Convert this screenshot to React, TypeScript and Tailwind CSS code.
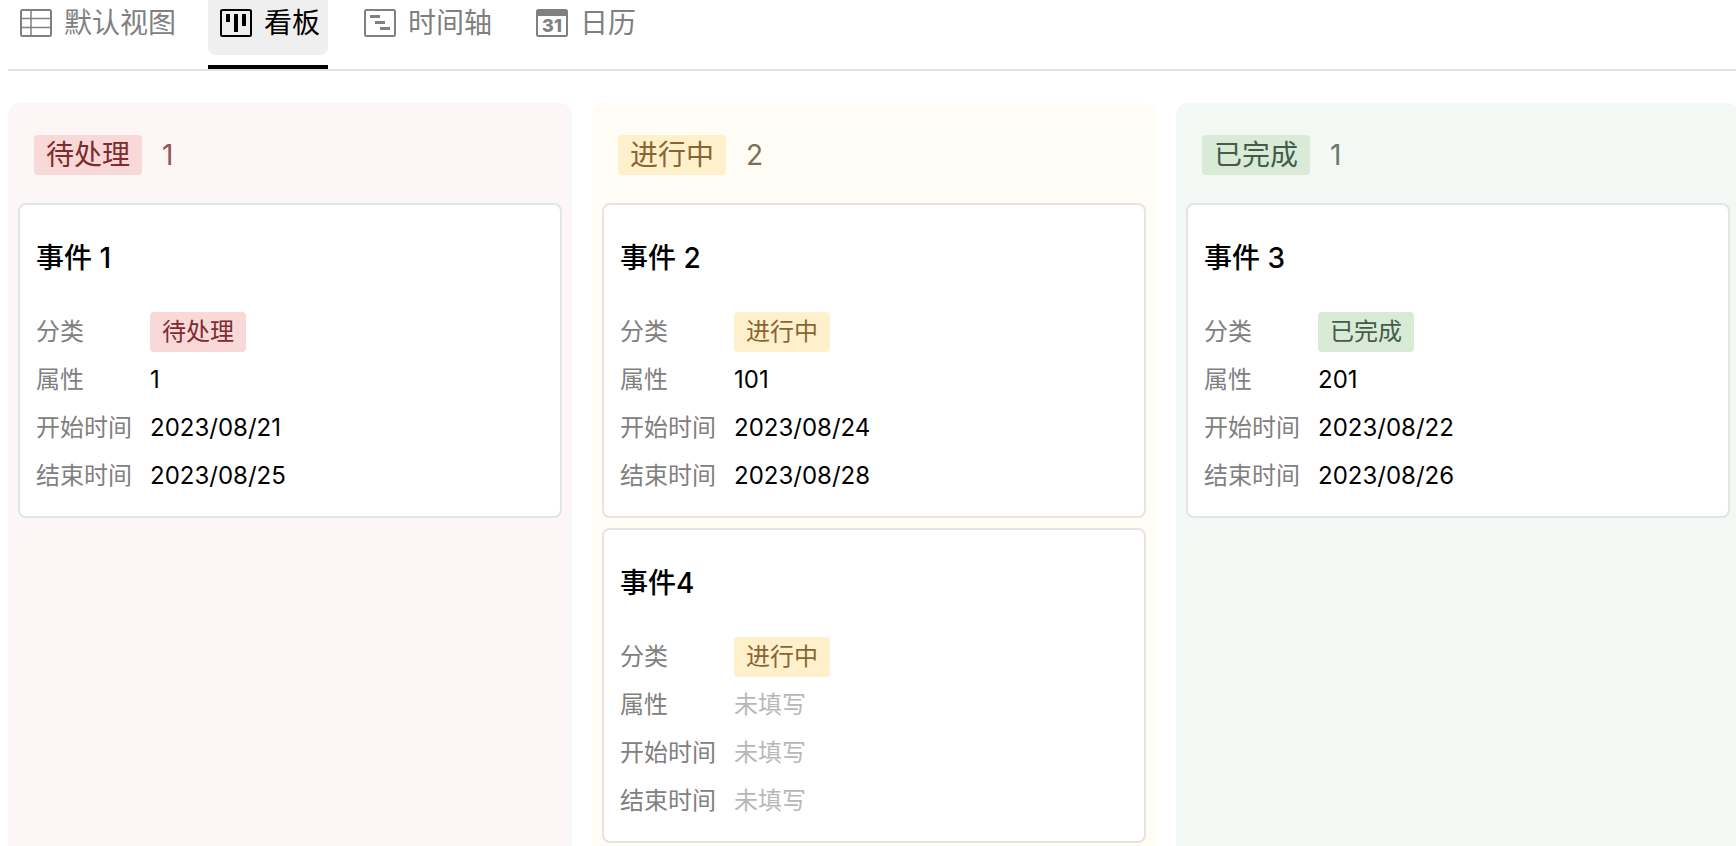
import { useState } from "react";
import type { ReactNode } from "react";
import clsx from "clsx";

type Status = "todo" | "doing" | "done";

type EventItem = {
  title: string;
  status: Status;
  value?: string;
  start?: string;
  end?: string;
};

const statusMap = {
  todo: {
    label: "待处理",
    column: "bg-[#fcf6f6]",
    tag: "bg-[#f9d8d8] text-[#7d2b2f]",
    count: "text-[#8f5558]",
  },
  doing: {
    label: "进行中",
    column: "bg-[#fffcf5]",
    tag: "bg-[#fef0cb] text-[#8a6433]",
    count: "text-[#816b52]",
  },
  done: {
    label: "已完成",
    column: "bg-[#f3f8f5]",
    tag: "bg-[#d9ebd7] text-[#435b4a]",
    count: "text-[#66796b]",
  },
};

const statusOrder: Status[] = ["todo", "doing", "done"];

const events: EventItem[] = [
  { title: "事件 1", status: "todo", value: "1", start: "2023/08/21", end: "2023/08/25" },
  { title: "事件 2", status: "doing", value: "101", start: "2023/08/24", end: "2023/08/28" },
  { title: "事件4", status: "doing" },
  { title: "事件 3", status: "done", value: "201", start: "2023/08/22", end: "2023/08/26" },
];

const TableIcon = () => (
  <svg width="32" height="28" viewBox="0 0 32 28" fill="none" stroke="currentColor">
    <rect x="1" y="1" width="30" height="26" rx="1.5" strokeWidth="2" />
    <path d="M11 1v26M1 9.5h30M1 18.5h30" strokeWidth="1.5" />
  </svg>
);

const BoardIcon = () => (
  <svg width="32" height="28" viewBox="0 0 32 28" fill="none" stroke="currentColor">
    <rect x="1" y="1" width="30" height="26" rx="1.5" strokeWidth="2" />
    <path d="M8 5v8M16 5v18M24 5v12" strokeWidth="4" />
  </svg>
);

const TimelineIcon = () => (
  <svg width="32" height="28" viewBox="0 0 32 28" fill="none" stroke="currentColor">
    <rect x="1" y="1" width="30" height="26" rx="1.5" strokeWidth="2" />
    <path d="M6 7.5h10M11 13.5h10M16 19.5h10" strokeWidth="3" />
  </svg>
);

const CalendarIcon = () => (
  <svg width="32" height="28" viewBox="0 0 32 28" fill="none">
    <rect x="1" y="1" width="30" height="26" rx="1.5" stroke="currentColor" strokeWidth="2" />
    <path d="M1 1h30v6H1z" fill="currentColor" />
    <text x="16" y="23" textAnchor="middle" fontSize="18" fontWeight="800" fill="currentColor" className="font-['Inter']">
      31
    </text>
  </svg>
);

const tabs = [
  { key: "table", label: "默认视图", icon: <TableIcon /> },
  { key: "board", label: "看板", icon: <BoardIcon /> },
  { key: "timeline", label: "时间轴", icon: <TimelineIcon /> },
  { key: "calendar", label: "日历", icon: <CalendarIcon /> },
];

const Field = ({ label, children }: { label: string; children?: ReactNode }) => (
  <div className="flex h-10 items-center">
    <dt className="w-[114px] shrink-0 text-[#808080]">{label}</dt>
    <dd>{children || <span className="text-[#b8b8b8]">未填写</span>}</dd>
  </div>
);

const Card = ({ item }: { item: EventItem }) => {
  const status = statusMap[item.status];

  return (
    <article className="rounded-lg border-2 border-[#e4e4e4] bg-white px-4 pb-5">
      <h3 className="pt-[33px] pb-[34px] text-[28px] leading-10 font-medium">{item.title}</h3>
      <dl className="flex flex-col gap-2 text-2xl leading-10">
        <Field label="分类">
          <span className={clsx("block rounded px-3", status.tag)}>{status.label}</span>
        </Field>
        <Field label="属性">{item.value}</Field>
        <Field label="开始时间">{item.start}</Field>
        <Field label="结束时间">{item.end}</Field>
      </dl>
    </article>
  );
};

const Column = ({ status }: { status: Status }) => {
  const info = statusMap[status];
  const items = events.filter((e) => e.status === status);

  return (
    <section className={clsx("rounded-t-xl px-2.5 pt-8", info.column)}>
      <div className="flex items-center gap-5 px-4 pb-7 text-[28px] leading-10">
        <h2 className={clsx("rounded px-3", info.tag)}>{info.label}</h2>
        <span className={info.count}>{items.length}</span>
      </div>
      <div className="flex flex-col gap-2.5">
        {items.map((item) => (
          <Card key={item.title} item={item} />
        ))}
      </div>
    </section>
  );
};

const App = () => {
  const [active, setActive] = useState("board");

  return (
    <div className="flex h-screen flex-col overflow-hidden bg-white pl-2 font-['Inter','Noto_Sans_CJK_SC',sans-serif] text-black">
      {/* View tabs */}
      <nav className="flex shrink-0 gap-6 border-b-2 border-[#e3e3e3]">
        {tabs.map((tab) => (
          <div
            key={tab.key}
            className={clsx("border-b-4 pb-2.5", active === tab.key ? "border-black" : "border-transparent")}
          >
            <button
              type="button"
              onClick={() => setActive(tab.key)}
              className={clsx(
                "flex cursor-pointer items-center gap-3 rounded-b-lg pt-[3px] pr-2 pb-3 pl-3 text-[28px] leading-10",
                active === tab.key ? "bg-[#efefef] text-black" : "text-[#808080]"
              )}
            >
              {tab.icon}
              {tab.label}
            </button>
          </div>
        ))}
      </nav>

      {/* Board, the last column runs slightly past the right edge */}
      <main className="mt-8 -mr-1 grid min-h-0 flex-1 grid-cols-3 gap-5">
        {statusOrder.map((status) => (
          <Column key={status} status={status} />
        ))}
      </main>
    </div>
  );
};

export default App;
